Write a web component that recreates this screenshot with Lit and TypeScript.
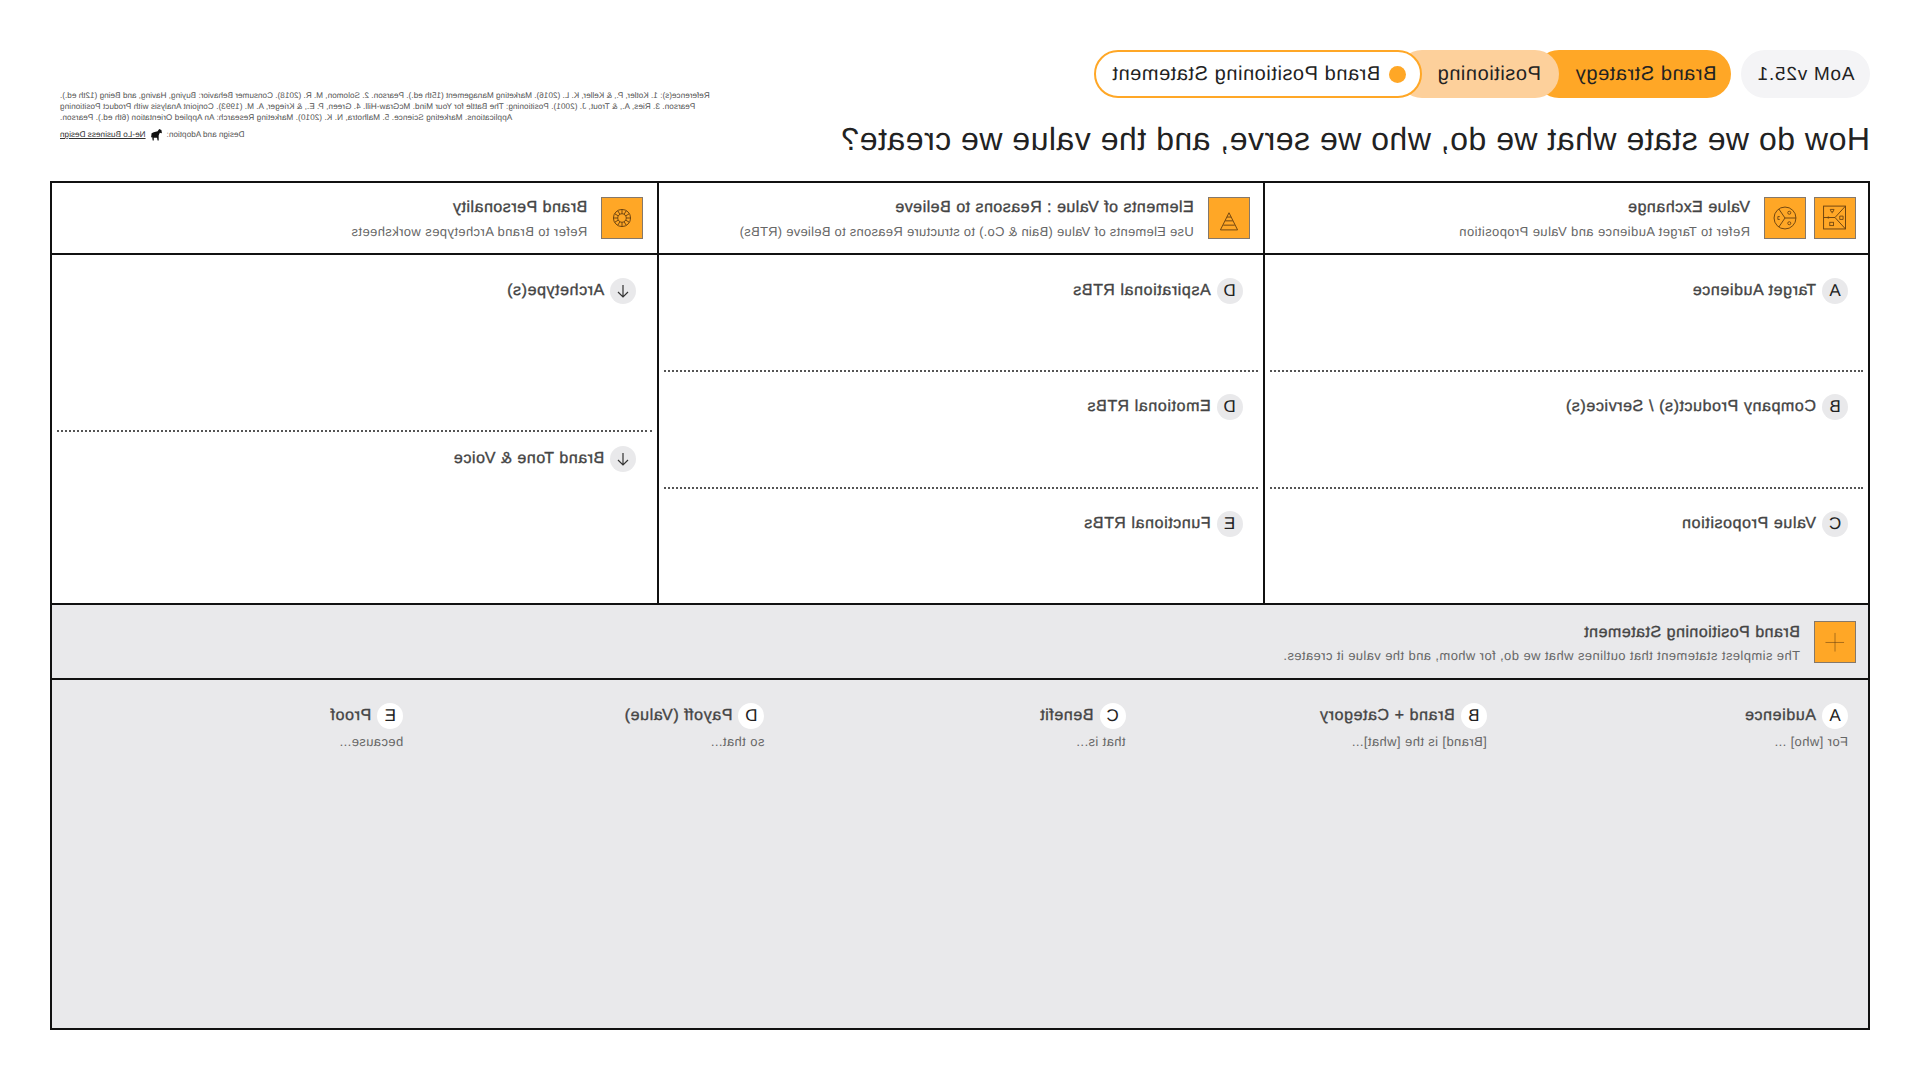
import { LitElement, html, css, svg } from "lit";
import { customElement } from "lit/decorators.js";

const S = "#6b4210";

const icoExchange = svg`<rect x="10" y="8.5" width="23" height="24" fill="none" stroke="${S}"/>
<path d="M10 8.5 L21 20.5 L10 32.5 M21 20.5 H33" fill="none" stroke="${S}"/>
<circle cx="28" cy="20.5" r="1" fill="${S}"/>
<path d="M12.5 19 h3.5 v3.5 h-3.5 z" fill="none" stroke="${S}" stroke-width=".9"/>
<path d="M22 12 h4 l-1 2.5 h-2 z M24 14.5 v1.5" fill="none" stroke="${S}" stroke-width=".9"/>
<rect x="22.5" y="25.5" width="4" height="3.5" fill="none" stroke="${S}" stroke-width=".9"/>`;

const icoPie = svg`<circle cx="21" cy="21" r="11.5" fill="none" stroke="${S}"/>
<path d="M21 21 L9.5 21 M21 21 L27.5 11.5 M21 21 L27.5 30.5" fill="none" stroke="${S}"/>
<circle cx="16.5" cy="15.5" r="1.6" fill="none" stroke="${S}" stroke-width=".9"/>
<circle cx="16.5" cy="26.5" r="1.6" fill="none" stroke="${S}" stroke-width=".9"/>
<path d="M26.5 19.5 h2 v3 h-2" fill="none" stroke="${S}" stroke-width=".9"/>`;

const icoPyramid = svg`<path d="M21 15.5 L30 33.5 H12 Z" fill="none" stroke="${S}"/>
<path d="M18.8 20 H23.2 M17 24 H25 M15 28.5 H27" fill="none" stroke="${S}"/>`;

const spokes = Array.from({ length: 12 }, (_, i) => {
  const a = (i * Math.PI) / 6;
  return `M${(21 + 4.5 * Math.cos(a)).toFixed(2)} ${(21 + 4.5 * Math.sin(a)).toFixed(2)} L${(21 + 9 * Math.cos(a)).toFixed(2)} ${(21 + 9 * Math.sin(a)).toFixed(2)}`;
}).join(" ");
const icoWheel = svg`<circle cx="21" cy="21" r="9" fill="none" stroke="${S}"/>
<circle cx="21" cy="21" r="4.5" fill="none" stroke="${S}"/>
<path d="${spokes}" fill="none" stroke="${S}"/>`;

const icoPlus = svg`<path d="M21 11.5 V31 M11.5 21.5 H31" fill="none" stroke="${S}" stroke-width=".6"/>`;

const arrow = html`<svg width="16" height="16" viewBox="0 0 16 16"><path d="M8 2 V14 M3 9 L8 14 L13 9" fill="none" stroke="#333" stroke-width="1.2"/></svg>`;

const horse = html`<svg class="horse" width="13" height="12" viewBox="0 0 11 11"><path d="M1 1 L3 0 L4.5 2 L8 3 L10 4 L10.5 8 L9.5 7 L9 10.5 L8 10.5 L8 8 L5 8 L4.5 10.5 L3.5 10.5 L3.5 6 L2.5 3.5 L0.5 4 Z" fill="#111"/></svg>`;

const box = (content: unknown) => html`<div class="ico"><svg width="40" height="40" viewBox="0 0 42 42">${content}</svg></div>`;

@customElement("app-root")
export class AppRoot extends LitElement {
  static styles = css`
    :host {
      display: block;
      width: 1920px;
      height: 1080px;
      transform: scaleX(-1);
      font-family: "Liberation Sans", Arial, sans-serif;
      text-rendering: geometricPrecision;
      color: #111;
      background: #fff;
    }
    .page { padding: 50px 50px 0; box-sizing: border-box; height: 1080px; }
    .head { display: flex; justify-content: space-between; height: 131px; }
    .left { display: flex; flex-direction: column; }
    .pills { display: flex; height: 48px; gap: 10px; }
    .ver { background: #f4f4f6; border-radius: 24px; padding: 1px 15.5px 0; display: flex; align-items: center; font-size: 19px; letter-spacing: 0.75px; color: #222; }
    .crumb { display: flex; font-size: 20px; letter-spacing: 0.55px; color: #222; }
    .seg { display: flex; align-items: center; border-radius: 24px; box-sizing: border-box; white-space: nowrap; }
    .s1 { background: #ffa726; padding: 1px 40px 0 15px; position: relative; z-index: 1; }
    .s2 { background: #fdd09b; padding: 1px 39.2px 0 18.4px; margin-left: -24px; position: relative; z-index: 2; }
    .s3 { background: #fff; border: 2px solid #ffa726; padding: 1px 16px 0 13.6px; margin-left: -24px; position: relative; z-index: 3; gap: 9px; }
    .dot { width: 17px; height: 17px; border-radius: 50%; background: #ffa726; }
    h1 { margin: 23px 0 0; font-weight: 400; font-size: 32px; line-height: 36px; letter-spacing: 0.5px; color: #222; white-space: nowrap; }
    .refs { margin: 40px 10px 0 0; text-align: right; font-size: 8.2px; line-height: 11.2px; color: #555; white-space: nowrap; }
    .l2 { letter-spacing: 0.043px; }
    .l3 { letter-spacing: 0.07px; }
    .design { margin-top: 5px; display: flex; justify-content: flex-end; align-items: center; gap: 4px; }
    .design u { color: #333; }
    .grid { border: 2px solid #111; height: 849px; box-sizing: border-box; display: flex; flex-direction: column; }
    .cols { display: grid; grid-template-columns: 1fr 1fr 1fr; height: 422px; border-bottom: 2px solid #111; flex: none; box-sizing: border-box; }
    .col { display: flex; flex-direction: column; border-right: 2px solid #111; min-width: 0; }
    .col:last-child { border-right: none; }
    .hd { height: 72px; box-sizing: border-box; border-bottom: 2px solid #111; display: flex; align-items: center; padding: 0 12px; gap: 14px; flex: none; }
    .col:nth-child(2) .hd { padding-left: 13px; }
    .col:nth-child(3) .hd { padding-left: 14px; }
    .icons { display: flex; gap: 8px; }
    .ico { width: 42px; height: 42px; box-sizing: border-box; background: #ffa726; border: 1px solid #85786a; flex: none; }
    .ico svg { display: block; }
    .txt { padding-top: 3px; }
    .band .txt { padding-top: 5px; }
    .tt { font-size: 16px; color: #444; -webkit-text-stroke: 0.35px #444; letter-spacing: 0.5px; line-height: 18px; white-space: nowrap; }
    .st { font-size: 13px; color: #666; letter-spacing: 0.4px; line-height: 16px; margin-top: 7px; white-space: nowrap; }
    .band .st { margin-top: 6.5px; }
    .col:nth-child(2) .st { letter-spacing: 0.27px; }
    .body { flex: 1; display: flex; flex-direction: column; padding: 0 5px; }
    .body.two { display: grid; grid-template-rows: 175px 1fr; }
    .row { flex: 1; padding: 22px 15px 0; border-top: 2px dotted #555; }
    .row:first-child { border-top: none; padding-top: 23px; }
    .two .row { padding-left: 16px; }
    .two .row:last-child { padding-top: 14px; }
    .lbl { display: flex; align-items: center; gap: 6px; font-size: 16px; color: #444; -webkit-text-stroke: 0.35px #444; letter-spacing: 0.6px; white-space: nowrap; }
    .badge { width: 26px; height: 26px; border-radius: 50%; background: #e9e9eb; display: flex; align-items: center; justify-content: center; font-size: 17px; color: #222; -webkit-text-stroke: 0; flex: none; letter-spacing: 0; }
    .band { background: #e9e9eb; flex: none; height: 75px; box-sizing: border-box; border-bottom: 2px solid #111; display: flex; align-items: center; padding: 0 12px; gap: 14px; }
    .bottom { background: #e9e9eb; flex: 1; display: grid; grid-template-columns: repeat(5, 1fr); padding: 23px 5px 0; align-items: start; }
    .cell { padding: 0 15px; }
    .cell .badge { background: #fff; }
    .cell .sub { font-size: 13px; color: #666; letter-spacing: 0.4px; margin-top: 4.5px; line-height: 16px; }
  `;

  private row(b: unknown, t: string) {
    return html`<div class="row"><div class="lbl"><span class="badge">${b}</span>${t}</div></div>`;
  }

  private hd(icons: unknown[], t: string, s: string) {
    return html`<div class="hd"><div class="icons">${icons.map(box)}</div><div class="txt"><div class="tt">${t}</div><div class="st">${s}</div></div></div>`;
  }

  render() {
    const cells = [
      ["A", "Audience", "For [who] ..."],
      ["B", "Brand + Category", "[Brand] is the [what]..."],
      ["C", "Benefit", "that is..."],
      ["D", "Payoff (Value)", "so that..."],
      ["E", "Proof", "because..."],
    ];
    return html`<div class="page">
      <div class="head">
        <div class="left">
          <div class="pills">
            <div class="ver">AoM v25.1</div>
            <div class="crumb">
              <div class="seg s1">Brand Strategy</div>
              <div class="seg s2">Positioning</div>
              <div class="seg s3"><span class="dot"></span>Brand Positioning Statement</div>
            </div>
          </div>
          <h1>How do we state what we do, who we serve, and the value we create?</h1>
        </div>
        <div class="refs">
          Reference(s): 1. Kotler, P., &amp; Keller, K. L. (2016). Marketing Management (15th ed.). Pearson. 2. Solomon, M. R. (2018). Consumer Behavior: Buying, Having, and Being (12th ed.).<br />
          <span class="l2">Pearson. 3. Ries, A., &amp; Trout, J. (2001). Positioning: The Battle for Your Mind. McGraw-Hill. 4. Green, P. E., &amp; Krieger, A. M. (1993). Conjoint Analysis with Product Positioning</span><br />
          <span class="l3">Applications. Marketing Science. 5. Malhotra, N. K. (2010). Marketing Research: An Applied Orientation (6th ed.). Pearson.</span>
          <div class="design"><span>Design and Adoption:</span>${horse}<u>Ne-Lo Business Design</u></div>
        </div>
      </div>
      <div class="grid">
        <div class="cols">
          <div class="col">
            ${this.hd([icoExchange, icoPie], "Value Exchange", "Refer to Target Audience and Value Proposition")}
            <div class="body">
              ${this.row("A", "Target Audience")}
              ${this.row("B", "Company Product(s) / Service(s)")}
              ${this.row("C", "Value Proposition")}
            </div>
          </div>
          <div class="col">
            ${this.hd([icoPyramid], "Elements of Value : Reasons to Believe", "Use Elements of Value (Bain & Co.) to structure Reasons to Believe (RTBs)")}
            <div class="body">
              ${this.row("D", "Aspirational RTBs")}
              ${this.row("D", "Emotional RTBs")}
              ${this.row("E", "Functional RTBs")}
            </div>
          </div>
          <div class="col">
            ${this.hd([icoWheel], "Brand Personality", "Refer to Brand Archetypes worksheets")}
            <div class="body two">
              ${this.row(arrow, "Archetype(s)")}
              ${this.row(arrow, "Brand Tone & Voice")}
            </div>
          </div>
        </div>
        <div class="band">
          ${box(icoPlus)}
          <div class="txt"><div class="tt">Brand Positioning Statement</div><div class="st">The simplest statement that outlines what we do, for whom, and the value it creates.</div></div>
        </div>
        <div class="bottom">
          ${cells.map(
            (c) => html`<div class="cell"><div class="lbl"><span class="badge">${c[0]}</span>${c[1]}</div><div class="sub">${c[2]}</div></div>`
          )}
        </div>
      </div>
    </div>`;
  }
}
